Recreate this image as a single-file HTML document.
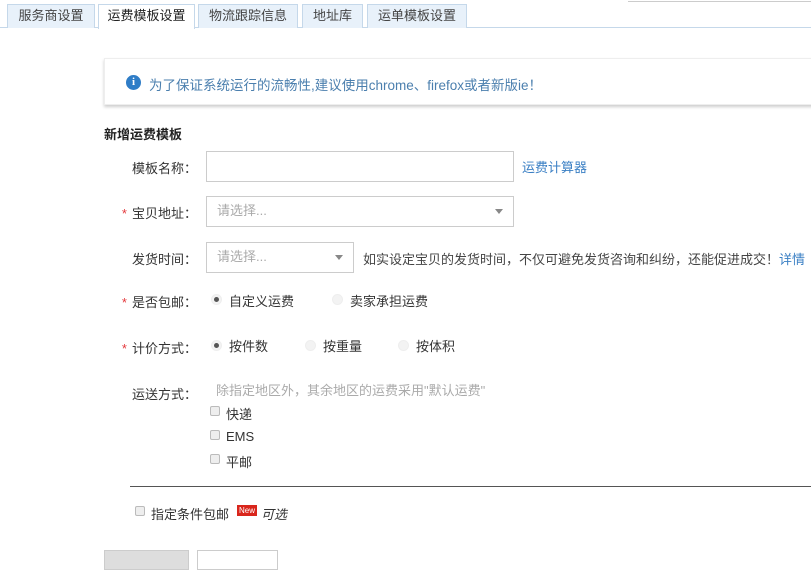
<!DOCTYPE html>
<html><head><meta charset="utf-8"><style>
*{margin:0;padding:0;box-sizing:border-box}
body{width:811px;height:559px;overflow:hidden;background:#fff;font-family:"Liberation Sans","Noto Sans CJK SC",sans-serif;font-size:13px;color:#333;position:relative}
.a{position:absolute}
.tab{position:absolute;top:4px;height:24px;border:1px solid #c5d8ea;border-bottom:none;background:#e8f1fa;line-height:22px;text-align:center;font-size:13px;color:#444}
.lbl{position:absolute;width:100px;text-align:right;left:97px;font-size:13px;color:#333}
.star{color:#e4393c;margin-right:5px}
.inp{position:absolute;border:1px solid #ccc;background:#fff;color:#aaa;padding-left:10px;line-height:28px;font-size:13px}
.arr{position:absolute;right:10px;top:12px;width:0;height:0;border-left:4px solid transparent;border-right:4px solid transparent;border-top:5px solid #888}
.rad{position:absolute;width:11px;height:11px;border-radius:50%;background:#f3f3f3;border:1px solid #eee}
.rad.on::after{content:"";position:absolute;left:2px;top:2px;width:5px;height:5px;border-radius:50%;background:#555}
.cb{position:absolute;width:10px;height:10px;border:1px solid #bbb;background:#eee;border-radius:2px}
</style></head><body>
<div class="a" style="left:628px;top:0;width:183px;height:2px;border-bottom:1px solid #ccc"></div>
<div class="a" style="left:0;top:27px;width:811px;height:1px;background:#c5d8ea"></div>
<div class="tab" style="left:7px;width:88px">服务商设置</div>
<div class="tab" style="left:98px;width:97px;background:#fff;height:25px;color:#222">运费模板设置</div>
<div class="tab" style="left:198px;width:100px">物流跟踪信息</div>
<div class="tab" style="left:302px;width:61px">地址库</div>
<div class="tab" style="left:367px;width:100px">运单模板设置</div>

<div class="a" style="left:104px;top:58px;width:720px;height:47px;border:1px solid #eee;box-shadow:0 2px 3px rgba(0,0,0,.2);background:#fff"></div>
<div class="a" style="left:126px;top:75px;width:15px;height:15px;border-radius:50%;background:#2f7dc7;color:#fff;font-size:11px;font-weight:bold;text-align:center;line-height:15px;font-family:'Liberation Serif',serif">i</div>
<div class="a" style="left:149px;top:74px;font-size:13.5px;color:#4b7fae">为了保证系统运行的流畅性,建议使用chrome、firefox或者新版ie！</div>

<div class="a" style="left:104px;top:124px;font-size:13px;font-weight:bold;color:#222">新增运费模板</div>

<div class="lbl" style="top:158px">模板名称：</div>
<div class="inp" style="left:206px;top:151px;width:308px;height:31px"></div>
<div class="a" style="left:522px;top:157px;color:#3a7fc4">运费计算器</div>

<div class="lbl" style="top:203px"><span class="star">*</span>宝贝地址：</div>
<div class="inp" style="left:206px;top:196px;width:308px;height:31px">请选择...<span class="arr"></span></div>

<div class="lbl" style="top:249px">发货时间：</div>
<div class="inp" style="left:206px;top:242px;width:148px;height:31px">请选择...<span class="arr"></span></div>
<div class="a" style="left:363px;top:249px;color:#444;white-space:nowrap">如实设定宝贝的发货时间，不仅可避免发货咨询和纠纷，还能促进成交！<span style="color:#3a7fc4">详情</span></div>

<div class="lbl" style="top:292px"><span class="star">*</span>是否包邮：</div>
<div class="rad on" style="left:211px;top:294px"></div><div class="a" style="left:229px;top:291px">自定义运费</div>
<div class="rad" style="left:332px;top:294px"></div><div class="a" style="left:350px;top:291px">卖家承担运费</div>

<div class="lbl" style="top:338px"><span class="star">*</span>计价方式：</div>
<div class="rad on" style="left:211px;top:340px"></div><div class="a" style="left:229px;top:336px">按件数</div>
<div class="rad" style="left:305px;top:340px"></div><div class="a" style="left:323px;top:336px">按重量</div>
<div class="rad" style="left:398px;top:340px"></div><div class="a" style="left:416px;top:336px">按体积</div>

<div class="lbl" style="top:384px">运送方式：</div>
<div class="a" style="left:216px;top:380px;color:#aaa">除指定地区外，其余地区的运费采用"默认运费"</div>
<div class="cb" style="left:210px;top:406px"></div><div class="a" style="left:226px;top:404px">快递</div>
<div class="cb" style="left:210px;top:430px"></div><div class="a" style="left:226px;top:429px">EMS</div>
<div class="cb" style="left:210px;top:454px"></div><div class="a" style="left:226px;top:452px">平邮</div>

<div class="a" style="left:130px;top:486px;width:681px;height:1px;background:#555"></div>
<div class="cb" style="left:135px;top:506px"></div>
<div class="a" style="left:151px;top:504px">指定条件包邮</div>
<div class="a" style="left:237px;top:505px;background:#d9261c;color:#fff;font-size:8px;padding:0 2px;height:11px;line-height:11px">New</div>
<div class="a" style="left:261px;top:504px;font-style:italic">可选</div>

<div class="a" style="left:104px;top:550px;width:85px;height:20px;background:#ddd;border:1px solid #ccc"></div>
<div class="a" style="left:197px;top:550px;width:81px;height:20px;background:#fff;border:1px solid #ccc"></div>
</body></html>
